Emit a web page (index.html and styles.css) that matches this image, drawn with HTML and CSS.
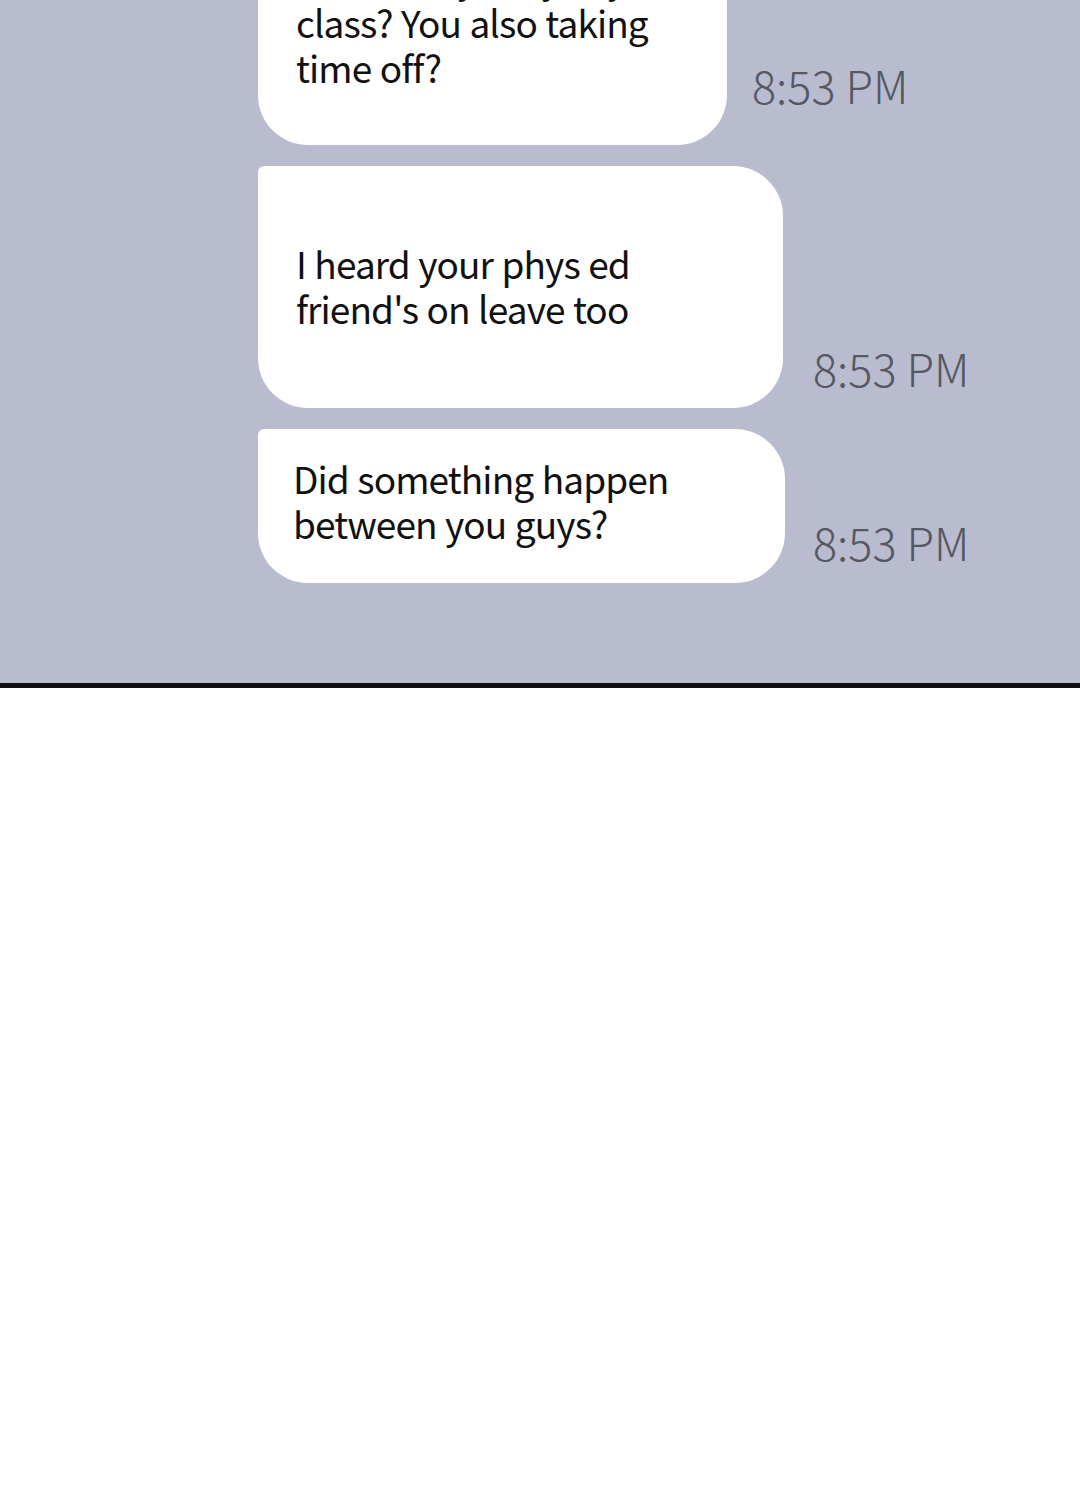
FILE: index.html
```html
<!DOCTYPE html>
<html lang="en">
<head>
<meta charset="utf-8">
<title>Chat</title>
<link rel="stylesheet" href="styles.css">
</head>
<body>
<div class="panel">
  <div class="chat">
    <div class="row row--first">
      <div class="bubble bubble--one">Wasn't anybody in your<br>class? You also taking<br>time off?</div>
      <div class="time time--one">8:53 PM</div>
    </div>
    <div class="row">
      <div class="bubble bubble--two">I heard your phys ed<br>friend's on leave too</div>
      <div class="time time--two">8:53 PM</div>
    </div>
    <div class="row">
      <div class="bubble bubble--three">Did something happen<br>between you guys?</div>
      <div class="time time--three">8:53 PM</div>
    </div>
  </div>
</div>
<div class="blank"></div>
</body>
</html>
```

FILE: styles.css
```css
html, body {
  margin: 0;
  padding: 0;
  background: #ffffff;
}

body {
  width: 1080px;
  height: 1500px;
  overflow: hidden;
  font-family: "Noto Sans CJK KR", "Noto Sans", sans-serif;
}

.panel {
  height: 683px;
  background: #b9bccf;
  border-bottom: 5px solid #111114;
  overflow: hidden;
  box-sizing: content-box;
}

.chat {
  display: flex;
  flex-direction: column;
  gap: 21px;
  padding-left: 258px;
}

.row {
  display: flex;
  align-items: flex-end;
}

.row--first {
  margin-top: -133px;
}

.bubble {
  background: #ffffff;
  color: #111111;
  font-size: 37px;
  line-height: 45px;
  letter-spacing: -0.9px;
  word-spacing: 1px;
  border-radius: 6px 50px 50px 50px;
  box-sizing: border-box;
}

.bubble--one {
  width: 469px;
  padding: 88px 20px 55px 38px;
}

.bubble--two {
  width: 525px;
  padding: 75px 20px 77px 38px;
}

.bubble--three {
  width: 527px;
  padding: 27px 20px 37px 35px;
}

.time {
  font-size: 45px;
  line-height: 46px;
  font-weight: 300;
  color: #555861;
  white-space: nowrap;
}

.time--one {
  margin-left: 25px;
  margin-bottom: 37px;
}

.time--two {
  margin-left: 30px;
  margin-bottom: 17px;
}

.time--three {
  margin-left: 28px;
  margin-bottom: 18px;
}

.blank {
  height: 800px;
  background: #ffffff;
}
```
